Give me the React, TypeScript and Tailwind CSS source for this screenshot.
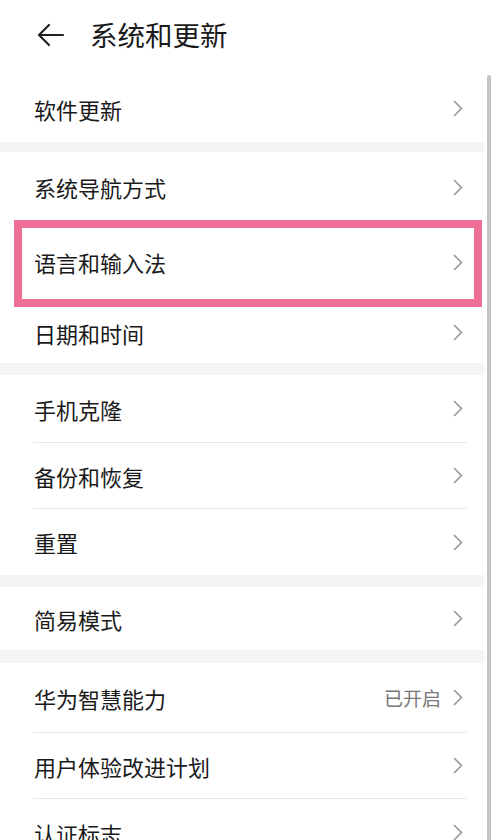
import type { ReactNode } from 'react'

const font = { fontFamily: '"Noto Sans CJK SC", "Noto Sans", sans-serif' }

function Chevron() {
  return (
    <svg width="10" height="17" viewBox="0 0 10 17" fill="none">
      <path d="M1.5 1.5 L8.5 8.5 L1.5 15.5" stroke="#999999" strokeWidth="1.7" strokeLinecap="round" strokeLinejoin="round" />
    </svg>
  )
}

function Row({ label, value, h, divider }: { label: string; value?: string; h: string; divider?: boolean }) {
  return (
    <div className="relative">
      <div className={`flex items-center justify-between pl-[34px] pr-[37px] ${h}`}>
        <span className="text-[22px] text-[#1a1a1a] leading-none">{label}</span>
        <div className="flex items-center gap-[12px]">
          {value ? <span className="text-[19px] text-[#777777] leading-none">{value}</span> : null}
          <Chevron />
        </div>
      </div>
      {divider ? <div className="ml-[33px] w-[434px] h-px bg-[#e8e8e8]" /> : null}
    </div>
  )
}

function Band({ h }: { h: string }) {
  return <div className={`w-[484px] bg-[#f4f4f4] ${h}`} />
}

function Section({ children }: { children: ReactNode }) {
  return <div className="bg-white">{children}</div>
}

export default function App() {
  return (
    <div className="relative w-[500px] h-[840px] overflow-hidden bg-white" style={font}>
      <div className="flex items-center h-[75px] pl-[36px] pb-[5px]">
        <svg width="28" height="24" viewBox="0 0 28 24" fill="none">
          <path d="M27 12 H3 M13 2 L3 12 L13 22" stroke="#222" strokeWidth="2.2" strokeLinecap="round" strokeLinejoin="round" />
        </svg>
        <span className="ml-[26px] text-[27.5px] text-[#1a1a1a] leading-none">系统和更新</span>
      </div>

      <Section>
        <Row label="软件更新" h="h-[67px]" />
      </Section>
      <Band h="h-[10px]" />
      <Section>
        <Row label="系统导航方式" h="h-[70px]" />
        <Row label="语言和输入法" h="h-[80px]" />
        <Row label="日期和时间" h="h-[61px]" />
      </Section>
      <Band h="h-[12px]" />
      <Section>
        <Row label="手机克隆" h="h-[67px]" divider />
        <Row label="备份和恢复" h="h-[65px]" divider />
        <Row label="重置" h="h-[66px]" />
      </Section>
      <Band h="h-[12px]" />
      <Section>
        <Row label="简易模式" h="h-[63px]" />
      </Section>
      <Band h="h-[13px]" />
      <Section>
        <Row label="华为智慧能力" value="已开启" h="h-[69px]" divider />
        <Row label="用户体验改进计划" h="h-[65px]" divider />
        <Row label="认证标志" h="h-[67px]" />
      </Section>

      <div className="absolute left-[14px] top-[220px] w-[468px] h-[87px] border-[8px] border-[#ef6e95]" />
      <div className="absolute left-[487px] top-[75px] w-[4px] h-[780px] rounded-full bg-[#c4c4c4]" />
    </div>
  )
}
